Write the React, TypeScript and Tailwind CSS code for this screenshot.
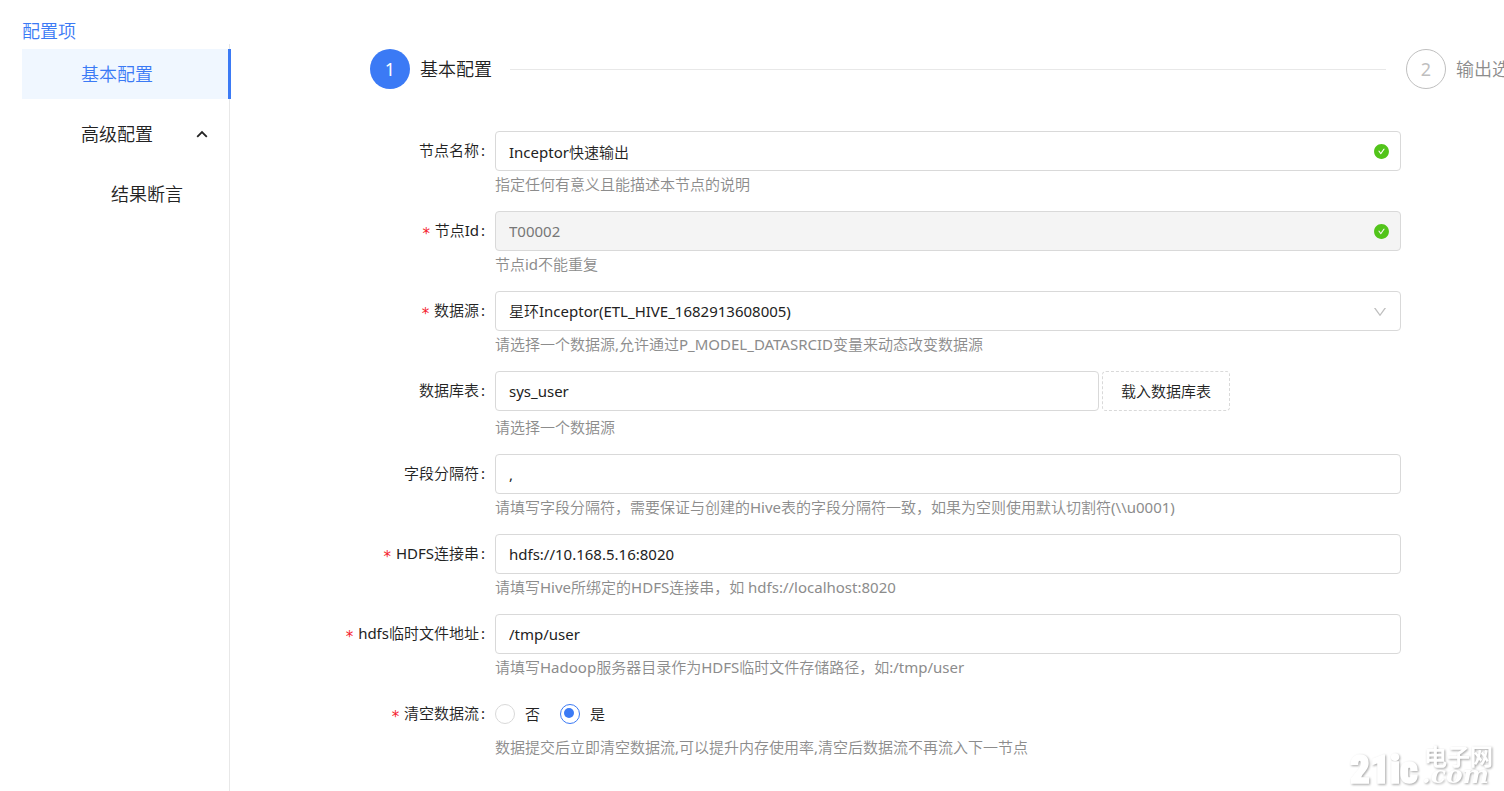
import React, { useState } from "react";
import { AiFillCheckCircle, AiOutlineDown } from "react-icons/ai";

const inputClass =
  "block h-10 w-full rounded border border-[#d9d9d9] bg-white px-[13px] text-[15px] text-[#222] outline-none focus:border-[#3b7af5]";

type RowProps = {
  label: string;
  htmlFor?: string;
  required?: boolean;
  hint: string;
  loose?: boolean;
  children: React.ReactNode;
};

const FormRow = ({ label, htmlFor, required, hint, loose, children }: RowProps) => (
  <div className="mb-3 flex">
    <div className="flex h-[38px] w-[265px] shrink-0 items-center justify-end pr-[10px] text-[#222]">
      {required && <span className="mr-1 pt-2 font-['DejaVu_Sans_Mono'] text-[#f5222d]">*</span>}
      <label htmlFor={htmlFor}>{label}</label>
      <span className="ml-0.5">:</span>
    </div>
    <div className="min-w-0 flex-1">
      <div className={loose ? "mb-[3px]" : ""}>{children}</div>
      <p className="h-7 truncate leading-[26px] text-[#8c8c8c]">{hint}</p>
    </div>
  </div>
);

const ValidMark = () => <AiFillCheckCircle className="absolute top-3 right-[11px] size-[17px] text-[#52c41a]" />;

const Sidebar = () => (
  <aside className="flex w-[208px] shrink-0 flex-col pt-[18px] text-lg">
    <h1 className="h-[26px] leading-[26px] text-[#3b7af5]">配置项</h1>
    <nav className="flex flex-1 flex-col gap-[10px] border-r border-[#e8e8e8] pt-[5px] text-[#222]">
      <a href="#basic" className="-mr-[2px] flex h-[50px] items-center border-r-[3px] border-[#3b7af5] bg-[#f0f7ff] pl-[59px] text-[#3b7af5]">
        基本配置
      </a>
      <button type="button" aria-expanded="true" className="flex h-[50px] items-center justify-between pr-[21px] pl-[59px]">
        高级配置
        <svg viewBox="0 0 12 8" className="h-2 w-3" fill="none" stroke="#222" strokeWidth="1.8">
          <path d="M1.2 6.8 6 2l4.800 4.800" />
        </svg>
      </button>
      <a href="#assert" className="flex h-[50px] items-center pl-[89px]">
        结果断言
      </a>
    </nav>
  </aside>
);

const Steps = () => (
  <ol className="-mr-6 flex h-10 items-center pl-[140px] text-lg whitespace-nowrap">
    <li className="flex flex-1 items-center text-[#222]">
      <span className="mr-[10px] flex size-10 items-center justify-center rounded-full bg-[#3b7af5] text-white">1</span>
      基本配置
      <span className="mr-5 ml-[18px] h-px flex-1 bg-[#e8e8e8]" />
    </li>
    <li className="flex items-center text-[#8c8c8c]">
      <span className="mr-[10px] flex size-10 items-center justify-center rounded-full border border-[#bfbfbf] text-[#bfbfbf]">2</span>
      输出选项
    </li>
  </ol>
);

const Watermark = () => (
  <svg
    viewBox="0 0 154 46"
    className="pointer-events-none absolute right-0 bottom-0 h-[46px] w-[154px] overflow-visible drop-shadow-[1px_1px_1px_rgba(0,0,0,0.35)]"
    fill="#fff"
  >
    <text
      x="0"
      y="38"
      fontFamily="'Roboto Condensed', 'Open Sans Condensed', 'Liberation Sans'"
      fontWeight="900"
      fontSize="39"
      stroke="#fff"
      strokeWidth="1.5"
    >
      21ic
    </text>
    <text x="74" y="20" fontFamily="'Noto Sans CJK SC', sans-serif" fontWeight="700" fontSize="23">
      电子网
    </text>
    <text x="72" y="38" fontFamily="'DejaVu Serif', serif" fontStyle="italic" fontWeight="700" fontSize="25">
      .com
    </text>
  </svg>
);

const App = () => {
  const [clear, setClear] = useState("yes");

  return (
    <div className="relative flex min-h-screen overflow-hidden bg-white pl-[22px] font-['Noto_Sans','Noto_Sans_CJK_SC_DemiLight','Noto_Sans_CJK_SC_Light','Noto_Sans_CJK_SC',sans-serif] text-[15px]">
      <Sidebar />
      <main className="min-w-0 flex-1 pt-[49px]">
        <Steps />
        <form className="mt-[42px] pr-[103px]">
          <FormRow label="节点名称" htmlFor="name" hint="指定任何有意义且能描述本节点的说明">
            <div className="relative">
              <input id="name" className={inputClass} defaultValue="Inceptor快速输出" />
              <ValidMark />
            </div>
          </FormRow>
          <FormRow label="节点Id" htmlFor="nodeId" required hint="节点id不能重复">
            <div className="relative">
              <input
                id="nodeId"
                disabled
                className="block h-10 w-full rounded border border-[#d9d9d9] bg-[#f4f4f4] px-[13px] text-[15px] text-[#777]"
                defaultValue="T00002"
              />
              <ValidMark />
            </div>
          </FormRow>
          <FormRow label="数据源" htmlFor="source" required hint="请选择一个数据源,允许通过P_MODEL_DATASRCID变量来动态改变数据源">
            <div className="relative">
              <select id="source" className={inputClass + " appearance-none"}>
                <option>星环Inceptor(ETL_HIVE_1682913608005)</option>
              </select>
              <AiOutlineDown className="pointer-events-none absolute top-[13px] right-[13px] size-4 text-[#bfbfbf]" />
            </div>
          </FormRow>
          <FormRow label="数据库表" htmlFor="table" hint="请选择一个数据源" loose>
            <div className="flex gap-[3px]">
              <div className="w-2/3">
                <input id="table" className={inputClass} defaultValue="sys_user" />
              </div>
              <button type="button" className="h-10 rounded border border-dashed border-[#d9d9d9] px-[18px] text-[#222]">
                载入数据库表
              </button>
            </div>
          </FormRow>
          <FormRow
            label="字段分隔符"
            htmlFor="separator"
            hint="请填写字段分隔符，需要保证与创建的Hive表的字段分隔符一致，如果为空则使用默认切割符(\\u0001)"
          >
            <input id="separator" className={inputClass} defaultValue="," />
          </FormRow>
          <FormRow label="HDFS连接串" htmlFor="hdfs" required hint="请填写Hive所绑定的HDFS连接串，如 hdfs://localhost:8020">
            <input id="hdfs" className={inputClass} defaultValue="hdfs://10.168.5.16:8020" />
          </FormRow>
          <FormRow label="hdfs临时文件地址" htmlFor="tmp" required hint="请填写Hadoop服务器目录作为HDFS临时文件存储路径，如:/tmp/user">
            <input id="tmp" className={inputClass} defaultValue="/tmp/user" />
          </FormRow>
          <FormRow label="清空数据流" required hint="数据提交后立即清空数据流,可以提升内存使用率,清空后数据流不再流入下一节点">
            <div className="flex h-10 items-center gap-5 text-[#222]">
              {[
                { value: "no", text: "否" },
                { value: "yes", text: "是" },
              ].map((item) => (
                <label key={item.value} className="flex items-center gap-[10px]">
                  <input
                    type="radio"
                    name="clear"
                    value={item.value}
                    checked={clear === item.value}
                    onChange={() => setClear(item.value)}
                    className="size-5 appearance-none rounded-full border border-[#d9d9d9] p-[3px] before:block before:size-[10px] before:rounded-full checked:border-[#3b7af5] checked:before:bg-[#3b7af5]"
                  />
                  {item.text}
                </label>
              ))}
            </div>
          </FormRow>
        </form>
      </main>
      <Watermark />
    </div>
  );
};

export default App;
